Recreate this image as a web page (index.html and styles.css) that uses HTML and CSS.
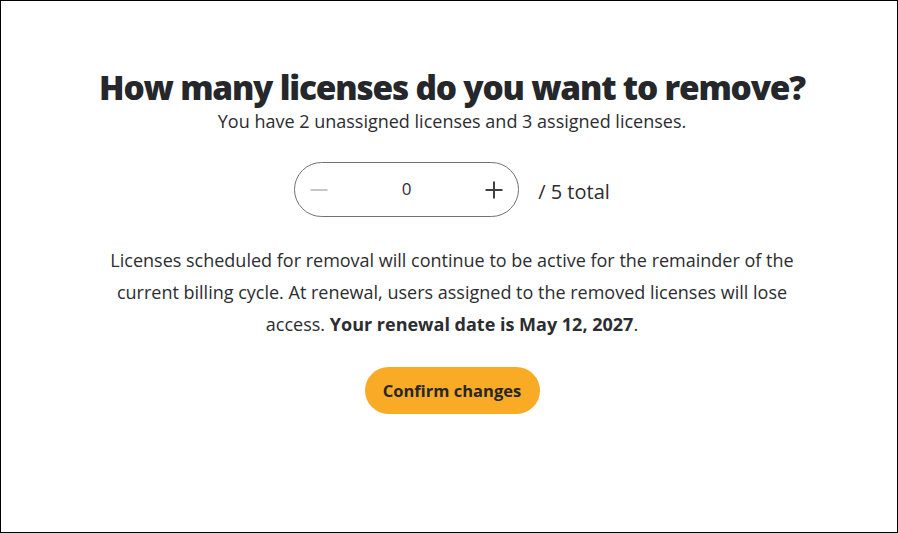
FILE: index.html
```html
<!DOCTYPE html>
<html>
<head>
<meta charset="utf-8">
<link rel="stylesheet" href="styles.css">
</head>
<body>
<div class="frame">
  <main class="panel">
    <h1 class="title">How many licenses do you want to remove?</h1>
    <p class="subtitle">You have 2 unassigned licenses and 3 assigned licenses.</p>
    <div class="stepper-row">
      <div class="stepper">
        <button class="step-btn minus" aria-label="Decrease">
          <svg width="20" height="20" viewBox="0 0 20 20"><path d="M1.5 10h17" stroke="#c4c6c8" stroke-width="2" fill="none"/></svg>
        </button>
        <span class="step-value">0</span>
        <button class="step-btn plus" aria-label="Increase">
          <svg width="20" height="20" viewBox="0 0 20 20"><path d="M1.5 10h17M10 1.5v17" stroke="#3d4045" stroke-width="2" fill="none"/></svg>
        </button>
      </div>
      <span class="total">/ 5 total</span>
    </div>
    <p class="info">Licenses scheduled for removal will continue to be active for the remainder of the current billing cycle. At renewal, users assigned to the removed licenses will lose access. <strong>Your renewal date is May 12, 2027</strong>.</p>
    <button class="confirm">Confirm changes</button>
  </main>
</div>
</body>
</html>
```
FILE: styles.css
```css
html, body {
  margin: 0;
  padding: 0;
  background: #fff;
}
.frame {
  box-sizing: border-box;
  width: 898px;
  height: 533px;
  border: 1px solid #000;
  font-family: "Open Sans", "Liberation Sans", sans-serif;
  color: #2b2d30;
}
.panel {
  display: flex;
  flex-direction: column;
  align-items: center;
  padding-top: 64px;
  padding-left: 6px;
}
.title {
  margin: 0;
  font-size: 33.4px;
  font-weight: 800;
  letter-spacing: -1.2px;
  line-height: 44px;
  color: #25272b;
}
.subtitle {
  margin: 0;
  font-size: 18px;
  line-height: 24px;
}
.stepper-row {
  display: flex;
  align-items: center;
  gap: 19px;
  margin-top: 29px;
}
.stepper {
  box-sizing: border-box;
  width: 225px;
  height: 55px;
  border: 1px solid #6f7276;
  border-radius: 28px;
  display: flex;
  align-items: center;
  justify-content: space-between;
  padding: 0 12px 0 12px;
}
.step-btn {
  background: none;
  border: 0;
  padding: 0;
  width: 24px;
  height: 24px;
  display: flex;
  align-items: center;
  justify-content: center;
}
.step-value {
  font-size: 17px;
  line-height: 20px;
  margin-bottom: 2px;
  color: #2b2d30;
}
.total {
  font-size: 20px;
  margin-top: 3px;
  color: #2b2d30;
}
.info {
  margin: 27px 0 0;
  width: 700px;
  text-align: center;
  font-size: 18px;
  line-height: 32px;
}
.info strong {
  font-weight: 700;
}
.confirm {
  margin-top: 27px;
  width: 175px;
  height: 47px;
  border: 0;
  border-radius: 24px;
  background: #f9ab26;
  font-family: "Open Sans", "Liberation Sans", sans-serif;
  font-weight: 700;
  font-size: 16.5px;
  color: #25272b;
}
```
